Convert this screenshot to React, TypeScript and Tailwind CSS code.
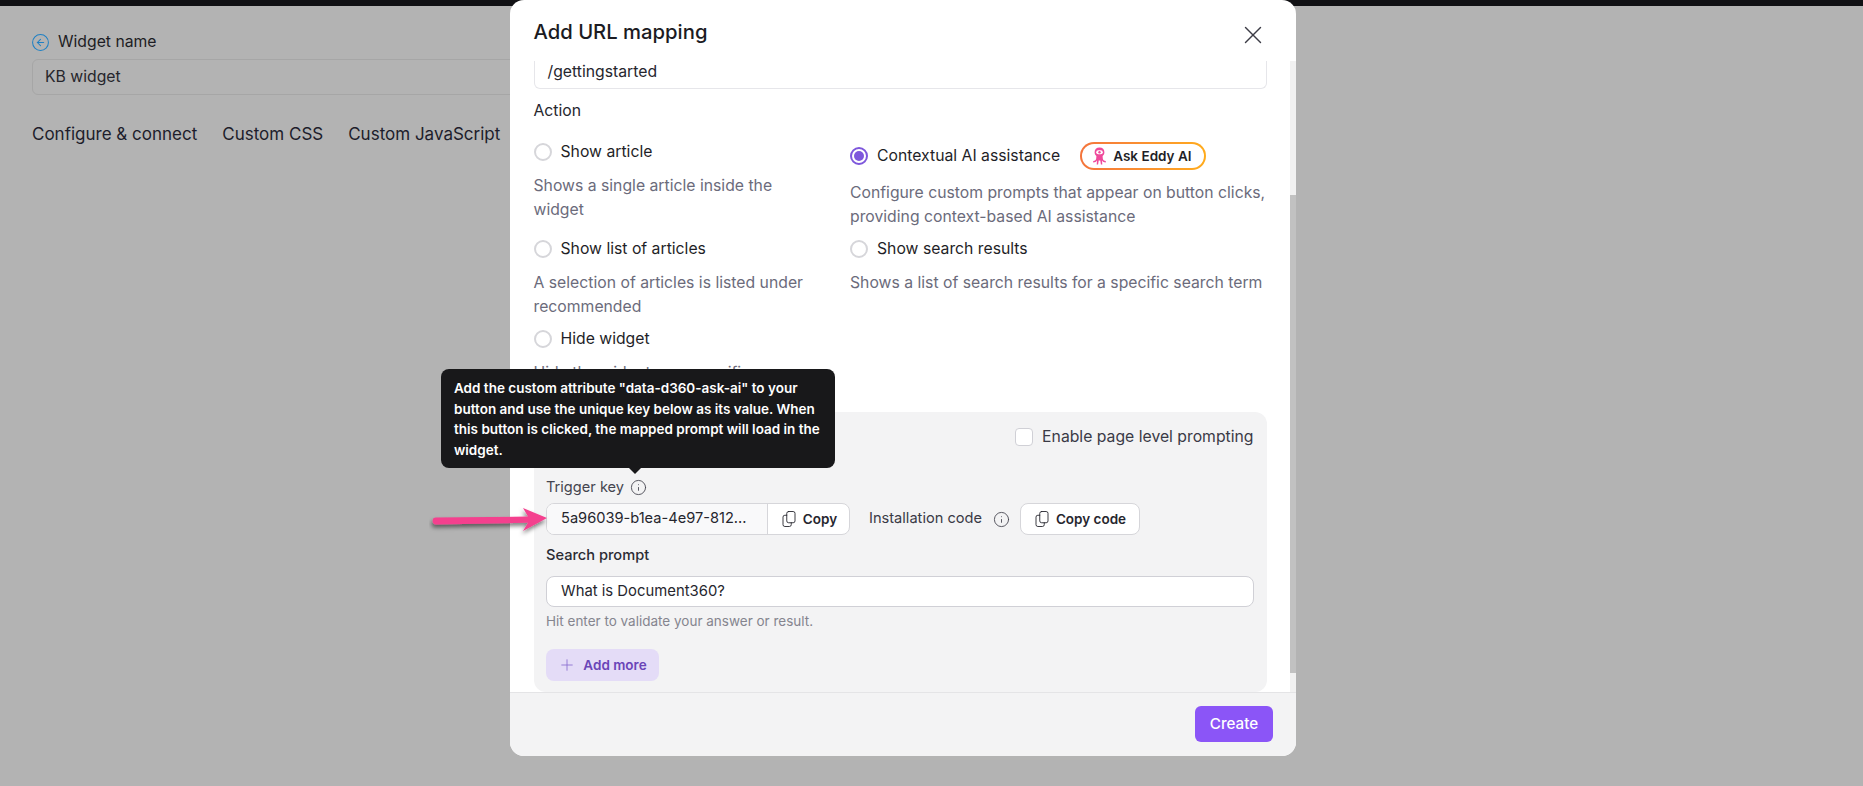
import { X, Plus, Info, CircleArrowLeft } from 'lucide-react';

const font = { fontFamily: 'Inter, sans-serif' };

// Octopus mark used on the Ask Eddy AI pill
function EddyIcon() {
  return (
    <svg width="15" height="18" viewBox="0 0 15 18" fill="#ef4a9b" className="shrink-0">
      <path d="M7.5 0.5C4.4 0.5 2.6 2.6 2.6 5.2 2.6 6.9 3.3 8.2 4.4 9L4.2 11.6C4.1 13 3 13.9 1.2 14V15.5C3.1 15.5 4.3 14.8 5 13.6L4.7 17.4H6.1L6.7 13.6H8.3L8.9 17.4H10.3L10 13.6C10.7 14.8 11.9 15.5 13.8 15.5V14C12 13.9 10.9 13 10.8 11.6L10.6 9C11.7 8.2 12.4 6.9 12.4 5.2 12.4 2.6 10.6 0.5 7.5 0.5Z" />
      <rect x="4.2" y="3.2" width="6.6" height="4" rx="2" fill="#fff" />
      <circle cx="7.5" cy="5.2" r="1.2" fill="#ef4a9b" />
    </svg>
  );
}

// Tall page in front, second page peeking out lower left
function CopyIcon() {
  return (
    <svg className="size-[18px] shrink-0" viewBox="0 0 24 24" fill="none" stroke="currentColor" strokeWidth="1.2" strokeLinecap="round" strokeLinejoin="round">
      <rect x="9" y="2" width="11" height="15" rx="2.5" />
      <path d="M9 7H6.5A2.5 2.5 0 0 0 4 9.5v10A2.5 2.5 0 0 0 6.5 22h6a2.5 2.5 0 0 0 2.5-2.5V17" />
    </svg>
  );
}

function Radio({ checked }: { checked?: boolean }) {
  return checked ? (
    <span className="flex size-[18px] shrink-0 items-center justify-center rounded-full border-2 border-[#7e57dc] bg-white">
      <span className="size-[10px] rounded-full bg-[#7e57dc]" />
    </span>
  ) : (
    <span className="size-[18px] shrink-0 rounded-full border-2 border-[#d6d6da] bg-white" />
  );
}

function ActionOption({ label, desc }: { label: string; desc: React.ReactNode }) {
  return (
    <div>
      <div className="flex items-center gap-[9px] text-[15.75px] leading-6 text-[#1f1f28]">
        <Radio />
        {label}
      </div>
      <p className="mt-[10px] text-[15.75px] leading-6 text-[#6b6b7b]">{desc}</p>
    </div>
  );
}

export default function App() {
  return (
    <div className="relative h-screen overflow-hidden bg-[#b3b3b3]" style={font}>
      <div className="h-[6px] bg-[#111114]" />

      {/* Page behind the dialog */}
      <div className="px-8 pt-[26px]">
        <div className="flex items-center gap-[8.5px] text-[15.75px] leading-5 text-[#1d1d24]">
          <CircleArrowLeft className="-ml-[1.5px] size-[19px] text-[#1f80c4]" strokeWidth={1.3} />
          Widget name
        </div>
        <div className="mt-[7px] flex h-9 w-[700px] items-center rounded-md border border-[#a6a6a6] px-3 text-[15.75px] text-[#26262c]">
          KB widget
        </div>
        <div className="mt-[27px] flex gap-[25px] text-[17px] leading-6 text-[#1d1d2b]">
          <span>Configure &amp; connect</span>
          <span>Custom CSS</span>
          <span>Custom JavaScript</span>
        </div>
      </div>

      {/* Dialog */}
      <div className="absolute left-[510px] top-0 flex h-[756px] w-[786px] flex-col overflow-hidden rounded-[14px] bg-white">
        <div className="flex h-[61px] shrink-0 items-center justify-between pl-[23.5px] pr-[28px] pt-[3px]">
          <h2 className="text-[20.25px] font-medium text-[#1b1b22]">Add URL mapping</h2>
          <X className="mt-[6px] size-[30px] text-[#3c3c46]" strokeWidth={1.15} />
        </div>

        <div className="flex min-h-0 flex-1">
          <div className="min-w-0 flex-1 overflow-hidden px-[23.5px]">
            <div className="flex h-7 items-center rounded-b-md border-x border-b border-[#e6e6ea] px-[13px] pb-[6px] text-[15.75px] text-[#26262e]">
              /gettingstarted
            </div>
            <div className="mt-[12px] text-[15.75px] leading-5 text-[#26262e]">Action</div>

            <div className="mt-[19px] grid h-[272px] grid-cols-[316.5px_1fr] content-start gap-y-2">
              <ActionOption label="Show article" desc={<>Shows a single article inside the<br />widget</>} />
              <div className="pt-[2px]">
                <div className="flex h-7 items-center gap-[9px] text-[15.75px] text-[#1f1f28]">
                  <Radio checked />
                  Contextual AI assistance
                  <span className="ml-[11px] rounded-full bg-gradient-to-r from-[#f4743b] to-[#ffab1a] p-[2px]">
                    <span className="flex h-6 w-[122px] items-center gap-[6px] rounded-full bg-white pl-[10px] text-[13.5px] font-semibold text-[#1f1f28]">
                      <EddyIcon />
                      Ask Eddy AI
                    </span>
                  </span>
                </div>
                <p className="mt-[11px] text-[15.75px] leading-6 text-[#6b6b7b]">
                  Configure custom prompts that appear on button clicks,
                  <br />
                  providing context-based AI assistance
                </p>
              </div>
              <ActionOption label="Show list of articles" desc={<>A selection of articles is listed under<br />recommended</>} />
              <ActionOption label="Show search results" desc="Shows a list of search results for a specific search term" />
              <ActionOption label="Hide widget" desc="Hide the widget on a specific page" />
            </div>

            {/* Contextual AI panel */}
            <div className="h-[280px] rounded-xl bg-[#f3f3f4] pl-[12.5px] pr-[13px] pt-4">
              <div className="flex justify-end">
                <label className="flex items-center gap-[9px] text-[15.75px] leading-[18px] text-[#3a3a46]">
                  <span className="size-[18px] rounded border border-[#d0d0d6] bg-white" />
                  Enable page level prompting
                </label>
              </div>
              <div className="mt-[31px] flex items-center gap-[5.5px] text-[14.625px] leading-5 text-[#45454f]">
                Trigger key
                <Info className="size-[17px]" strokeWidth={1.25} />
              </div>
              <div className="mt-[6px] flex h-8 items-center">
                <div className="flex h-full w-[304px] overflow-hidden rounded-lg border border-[#d6d6da] bg-white">
                  <div className="flex w-[220px] items-center bg-[#f9f9fa] pl-[14px] text-[14.625px] text-[#26262e]">
                    5a96039-b1ea-4e97-812...
                  </div>
                  <div className="flex flex-1 items-center justify-center gap-[5px] border-l border-[#d6d6da] text-[13.5px] font-semibold text-[#26262e]">
                    <CopyIcon />
                    Copy
                  </div>
                </div>
                <span className="ml-[19px] text-[14.625px] text-[#3a3a46]">Installation code</span>
                <Info className="ml-[11px] size-[17px] text-[#45454f]" strokeWidth={1.25} />
                <div className="ml-[9.5px] flex h-full w-[120px] items-center justify-center gap-[5px] rounded-lg border border-[#d6d6da] bg-white text-[13.5px] font-semibold text-[#26262e]">
                  <CopyIcon />
                  Copy code
                </div>
              </div>
              <div className="mt-[10px] text-[14.625px] font-medium leading-5 text-[#2b2b33]">Search prompt</div>
              <div className="mt-[11px] flex h-[31px] items-center rounded-lg border border-[#d0d0d6] bg-white pl-[14px] text-[14.85px] text-[#26262e]">
                What is Document360?
              </div>
              <div className="mt-[4px] text-[13.5px] leading-5 text-[#85858f]">Hit enter to validate your answer or result.</div>
              <div className="mt-[18px] flex h-8 w-[113px] items-center justify-center gap-[7px] rounded-lg bg-[#e4dcf7] text-[13.5px] font-semibold text-[#6a45b8]">
                <Plus className="size-[18px] text-[#8a6fd0]" strokeWidth={1.15} />
                Add more
              </div>
            </div>
          </div>

          {/* Scrollbar */}
          <div className="flex w-[6px] shrink-0 flex-col bg-[#f1f1f1]">
            <div className="h-[134px]" />
            <div className="h-[478px] bg-[#c1c1c1]" />
          </div>
        </div>

        <div className="flex h-[64px] shrink-0 items-center justify-end border-t border-[#e4e4e6] bg-[#f3f3f4] pb-[1px] pr-[23px]">
          <button className="h-9 w-[78px] rounded-md bg-[#8b55f7] text-[15.2px] font-medium text-white">Create</button>
        </div>
      </div>

      {/* Tooltip over the Trigger key info icon */}
      <div className="absolute left-[441px] top-[369px] h-[99px] w-[394px] rounded-lg bg-[#18181a] pl-[13px] pr-[10px] pt-[9px] text-[13.5px] font-semibold leading-[20.5px] text-white">
        Add the custom attribute "data-d360-ask-ai" to your button and use the unique key below as its value. When this button is clicked, the mapped prompt will load in the widget.
        <span className="absolute left-[188px] top-full size-0 border-x-[6px] border-t-[6px] border-x-transparent border-t-[#18181a]" />
      </div>

      {/* Annotation arrow */}
      <svg className="absolute left-[429px] top-[503px]" width="124" height="38" viewBox="0 0 124 38">
        <defs>
          <filter id="arrowShadow" x="-10%" y="-30%" width="120%" height="170%">
            <feDropShadow dx="-1" dy="3" stdDeviation="2.2" floodColor="#000" floodOpacity="0.5" />
          </filter>
        </defs>
        <path
          d="M7 14.6L99 13.6L94 5L118 15L94 28L99 19.8L7 21.4A3.4 3.4 0 0 1 7 14.6Z"
          fill="#f43f8e"
          filter="url(#arrowShadow)"
        />
      </svg>
    </div>
  );
}
